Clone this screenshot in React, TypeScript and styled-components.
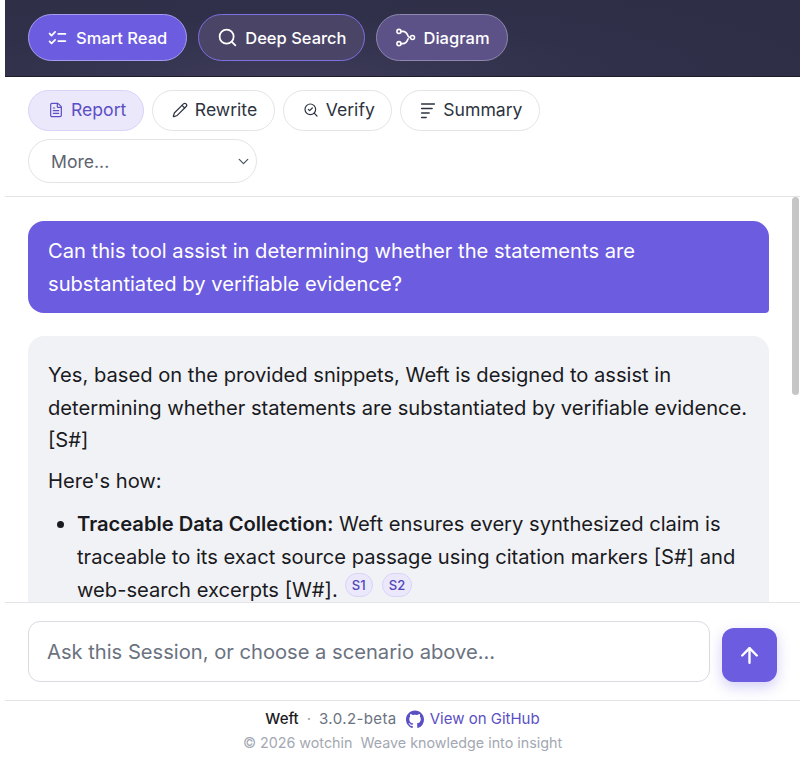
import React from 'react';
import styled, { createGlobalStyle } from 'styled-components';
import { ArrowUp, ChevronDown, FileText, Pencil, Search, SearchCheck } from 'lucide-react';

const GlobalStyle = createGlobalStyle`
  html, body {
    margin: 0;
    padding: 0;
    background: #fff;
    font-family: Inter, "Liberation Sans", sans-serif;
    color: #1a1a22;
  }
  * { box-sizing: border-box; }
`;

const ChecksIcon = () => (
  <svg width="19" height="19" viewBox="0 0 24 24" fill="none" stroke="currentColor" strokeWidth="2.2" strokeLinecap="round" strokeLinejoin="round">
    <path d="m2 7 2.5 2.5L9 5" />
    <path d="m2 17 2.5 2.5L9 15" />
    <path d="M13 7.5h9" />
    <path d="M13 16.5h9" />
  </svg>
);

const DiagramIcon = () => (
  <svg width="21" height="21" viewBox="0 0 24 24" fill="none" stroke="currentColor" strokeWidth="1.8" strokeLinecap="round">
    <circle cx="4.5" cy="5" r="2.3" />
    <circle cx="4.5" cy="19" r="2.3" />
    <circle cx="20" cy="12" r="2.3" />
    <path d="M7 5h2c4 0 5 3 6 5.5.3.8 1 1.5 2.6 1.5" />
    <path d="M7 19h2c4 0 5-3 6-5.5" />
  </svg>
);

const LinesIcon = () => (
  <svg width="16" height="18" viewBox="0 0 21 24" fill="none" stroke="currentColor" strokeWidth="2" strokeLinecap="round">
    <path d="M2 4h17" />
    <path d="M2 10h14" />
    <path d="M2 16h10" />
    <path d="M2 22h6" />
  </svg>
);

const GithubMark = () => (
  <svg width="18" height="18" viewBox="0 0 24 24" fill="#5b4fc4">
    <path d="M12 .5C5.37.5 0 5.87 0 12.5c0 5.3 3.44 9.8 8.2 11.39.6.11.82-.26.82-.58v-2.03c-3.34.73-4.04-1.61-4.04-1.61-.55-1.39-1.33-1.76-1.33-1.76-1.09-.74.08-.73.08-.73 1.2.09 1.84 1.24 1.84 1.24 1.07 1.83 2.81 1.3 3.5 1 .11-.78.42-1.3.76-1.6-2.67-.3-5.47-1.33-5.47-5.93 0-1.31.47-2.38 1.24-3.22-.13-.3-.54-1.52.12-3.18 0 0 1.01-.32 3.3 1.23a11.5 11.5 0 0 1 6 0c2.29-1.55 3.3-1.23 3.3-1.23.66 1.66.25 2.88.12 3.18.77.84 1.24 1.91 1.24 3.22 0 4.61-2.81 5.62-5.48 5.92.43.37.81 1.1.81 2.22v3.29c0 .32.22.7.83.58A12 12 0 0 0 24 12.5C24 5.87 18.63.5 12 .5z" />
  </svg>
);

const App = () => {
  return (
    <>
      <GlobalStyle />
      <Shell>
        <ModeBar>
          <ModeButton $variant="active">
            <ChecksIcon />
            Smart Read
          </ModeButton>
          <ModeButton $variant="outlined">
            <Search size={21} strokeWidth={2} />
            Deep Search
          </ModeButton>
          <ModeButton $variant="muted">
            <DiagramIcon />
            Diagram
          </ModeButton>
        </ModeBar>

        <ScenarioBar>
          <Chip $active>
            <FileText size={16} strokeWidth={1.8} />
            Report
          </Chip>
          <Chip>
            <Pencil size={16} strokeWidth={1.8} />
            Rewrite
          </Chip>
          <Chip>
            <SearchCheck size={16} strokeWidth={1.8} />
            Verify
          </Chip>
          <Chip>
            <LinesIcon />
            Summary
          </Chip>
          <MoreSelect>
            More...
            <ChevronDown size={17} strokeWidth={1.8} color="#4b5563" />
          </MoreSelect>
        </ScenarioBar>

        <MessagesFrame>
          <Messages>
            <UserBubble>Can this tool assist in determining whether the statements are substantiated by verifiable evidence?</UserBubble>
            <AssistantBubble>
              <Para>Yes, based on the provided snippets, Weft is designed to assist in determining whether statements are substantiated by verifiable evidence. [S#]</Para>
              <Para>Here's how:</Para>
              <BulletList>
                <li>
                  <strong>Traceable Data Collection:</strong> Weft ensures every synthesized claim is traceable to its exact source passage using citation markers [S#] and web-search excerpts [W#].
                  <Cite>S1</Cite>
                  <Cite>S2</Cite>
                </li>
              </BulletList>
            </AssistantBubble>
          </Messages>
          <ScrollThumb />
        </MessagesFrame>

        <Composer>
          <AskField>Ask this Session, or choose a scenario above...</AskField>
          <SendButton>
            <ArrowUp size={25} strokeWidth={2.3} />
          </SendButton>
        </Composer>

        <Footer>
          <FooterRow>
            <Brand>Weft</Brand>
            <Dot>·</Dot>
            <Version>3.0.2-beta</Version>
            <RepoLink>
              <GithubMark />
              View on GitHub
            </RepoLink>
          </FooterRow>
          <Copyright>© 2026 wotchin&nbsp; Weave knowledge into insight</Copyright>
        </Footer>
      </Shell>
    </>
  );
};

export default App;

const Shell = styled.div`
  display: flex;
  flex-direction: column;
  width: 795px;
  height: 770px;
  margin-left: 5px;
  overflow: hidden;
`;

const ModeBar = styled.div`
  display: flex;
  gap: 11px;
  height: 77px;
  flex: none;
  padding: 14px 23px 0;
  background: radial-gradient(ellipse 70% 130% at 35% 100%, #3c3a58 0%, #30304a 60%, #2e2e46 100%);
  border-bottom: 1px solid #1c1c2a;
`;

const modeStyles = {
  active: 'background: #6c5ce0; border-color: #a79df0; gap: 9px; padding: 0 19px;',
  outlined: 'background: #4a4466; border-color: #7d70e0; gap: 7px; padding: 0 17px 0 18px;',
  muted: 'background: #5c5288; border-color: #8e88ad; gap: 8px; padding: 0 17px 0 18px;',
};

const ModeButton = styled.div<{ $variant: keyof typeof modeStyles }>`
  display: flex;
  align-items: center;
  height: 47px;
  border: 1.5px solid;
  border-radius: 24px;
  color: #fff;
  font-size: 16.5px;
  font-weight: 500;
  ${({ $variant }) => modeStyles[$variant]}
`;

const ScenarioBar = styled.div`
  display: flex;
  flex-wrap: wrap;
  gap: 8px;
  height: 120px;
  flex: none;
  padding: 13px 40px 0 23px;
  align-content: flex-start;
  border-bottom: 1px solid #e3e4e8;
`;

const Chip = styled.div<{ $active?: boolean }>`
  display: flex;
  align-items: center;
  gap: 7px;
  height: 41px;
  padding: 0 16.5px 2px 19px;
  border: 1px solid ${({ $active }) => ($active ? '#d9d3f8' : '#e3e4e8')};
  border-radius: 21px;
  background: ${({ $active }) => ($active ? '#ebe8fb' : '#fff')};
  color: ${({ $active }) => ($active ? '#5b4fc4' : '#2d3340')};
  font-size: 17.6px;
`;

const MoreSelect = styled.div`
  display: flex;
  align-items: center;
  justify-content: space-between;
  width: 229px;
  height: 44px;
  padding: 0 4px 0 22px;
  border: 1px solid #e3e4e8;
  border-radius: 22px;
  color: #5d6470;
  font-size: 17.6px;
`;

const MessagesFrame = styled.div`
  position: relative;
  flex: 1;
  min-height: 0;
`;

const Messages = styled.div`
  height: 100%;
  padding: 24px 31px 0 23px;
  overflow: hidden;
`;

const ScrollThumb = styled.div`
  position: absolute;
  top: 0;
  right: 1px;
  width: 7px;
  height: 198px;
  border-radius: 4px;
  background: #c6c6c6;
`;

const UserBubble = styled.div`
  padding: 14px 20px 13px;
  border-radius: 16px 16px 4px 16px;
  background: #6c5ce0;
  color: #fff;
  font-size: 20.15px;
  line-height: 32.5px;
`;

const AssistantBubble = styled.div`
  min-height: 480px;
  margin-top: 23px;
  padding: 23px 20px 14px;
  border-radius: 16px 16px 16px 4px;
  background: #f1f2f5;
  font-size: 20.15px;
  line-height: 32.5px;

  strong {
    font-weight: 600;
  }
`;

const Para = styled.p`
  margin: 0 0 8px;
`;

const BulletList = styled.ul`
  margin: 11px 0 0;
  padding-left: 29px;
`;

const Cite = styled.sup`
  display: inline-flex;
  align-items: center;
  justify-content: center;
  min-width: 28px;
  height: 24px;
  margin-left: 7px;
  padding: 0 6px;
  border: 1px solid #d9d3f8;
  border-radius: 12px;
  background: #ebe8fb;
  color: #4f46b8;
  font-size: 13px;
  font-weight: 500;
  line-height: 1;
  vertical-align: 7px;

  & + & {
    margin-left: 9px;
  }
`;

const Composer = styled.div`
  display: flex;
  gap: 12px;
  height: 99px;
  flex: none;
  padding: 18px 23px 0;
  background: #fff;
  border-top: 1px solid #e3e4e8;
  border-bottom: 1px solid #e3e4e8;
`;

const AskField = styled.div`
  flex: 1;
  height: 61px;
  padding: 0 18px;
  display: flex;
  align-items: center;
  border: 1px solid #d9dbe0;
  border-radius: 12px;
  color: #6b7280;
  font-size: 20.15px;
`;

const SendButton = styled.div`
  display: flex;
  align-items: center;
  justify-content: center;
  width: 55px;
  height: 54px;
  flex: none;
  margin-top: 7px;
  border-radius: 12px;
  background: #6c5ce0;
  color: #fff;
  box-shadow: 0 5px 14px rgba(108, 92, 224, 0.3);
`;

const Footer = styled.div`
  display: flex;
  flex-direction: column;
  align-items: center;
  flex: none;
  height: 69px;
  padding-top: 7px;
`;

const FooterRow = styled.div`
  display: flex;
  align-items: center;
  height: 21px;
  font-size: 15px;
`;

const Brand = styled.span`
  color: #1a1a22;
  font-weight: 500;
`;

const Dot = styled.span`
  margin: 0 8px;
  color: #9ca3af;
`;

const Version = styled.span`
  color: #6b7280;
  margin-right: 9px;
  letter-spacing: 0.4px;
`;

const RepoLink = styled.span`
  display: flex;
  align-items: center;
  gap: 6px;
  color: #5b4fc4;
`;

const Copyright = styled.div`
  margin-top: 5px;
  color: #a3a8b2;
  font-size: 14.3px;
`;
